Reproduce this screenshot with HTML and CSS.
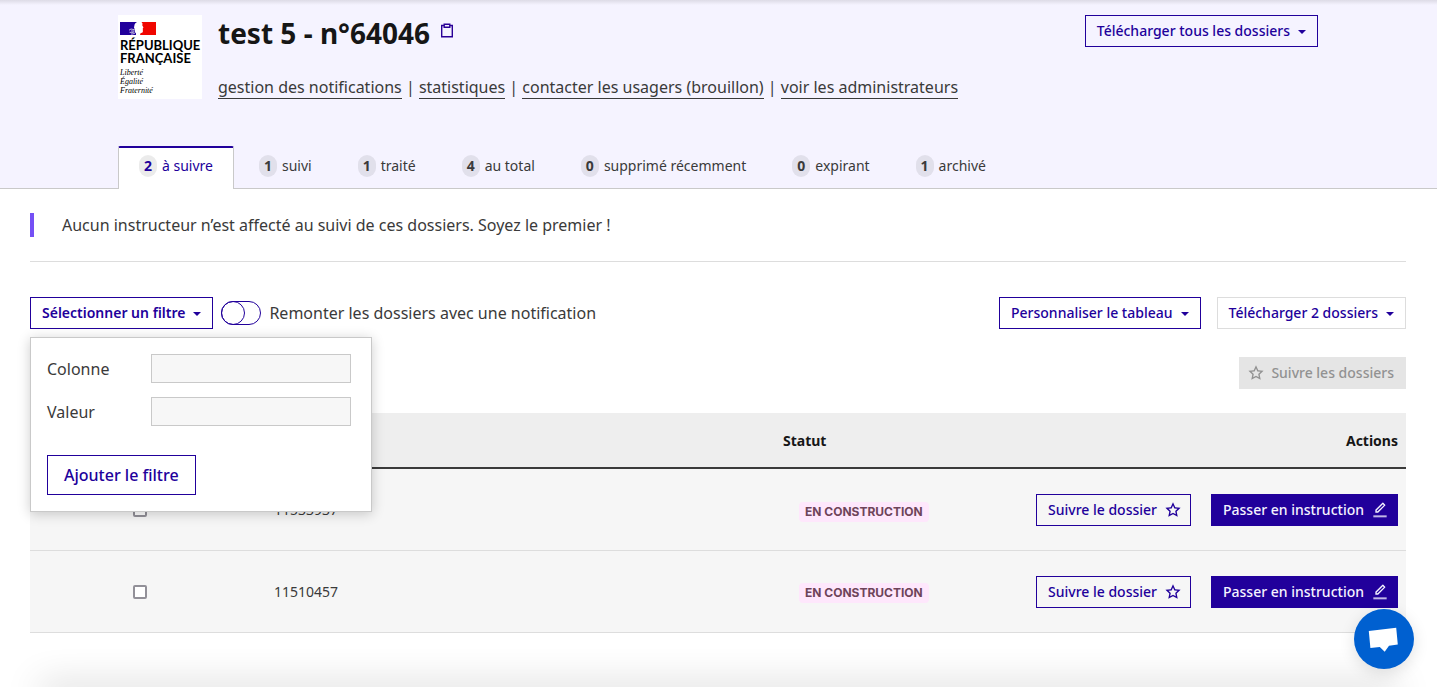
FILE: index.html
```html
<!DOCTYPE html>
<html lang="fr">
<head>
<meta charset="utf-8">
<meta name="viewport" content="width=device-width, initial-scale=1">
<title>test 5 - n°64046</title>
<link rel="stylesheet" href="styles.css">
</head>
<body>
<svg class="sprite" aria-hidden="true">
  <symbol id="star" viewBox="0 0 24 24"><path d="M12 18.3 4.9 22.2 6.5 14.300.6 8.800 8.600 7.900 12 .5 15.400 7.900 23.400 8.800 17.500 14.300 19.100 22.200ZM12 16 16.200 18.400 15.300 13.600 18.800 10.300 14 9.700 12 5.300 10 9.700 5.200 10.300 8.700 13.600 7.800 18.400Z" fill="currentColor" fill-rule="evenodd"/></symbol>
  <symbol id="pencil" viewBox="0 0 24 24"><path d="M5 16 5 11.800 15.600 1.200a1 1 0 0 1 1.400 0l2.800 2.800a1 1 0 0 1 0 1.400L9.200 16ZM7 14h1.400L17.700 4.700 16.300 3.300 7 12.600Z" fill="currentColor" fill-rule="evenodd"/><path d="M2 20h20v3H2z" fill="currentColor" opacity=".75"/></symbol>
</svg>

<header class="page-header">
  <div class="container">
    <div class="heading">
      <div class="logo">
        <svg class="flag" viewBox="0 0 36 13" aria-hidden="true">
          <path d="M0 0h36v13H0z" fill="#fff"/>
          <path d="M0 0h17c-1.500 1-2.500 2-2.600 3.500l-.4 2 1 2.500-.3 2 1.300 1.300V13H0z" fill="#21009b"/>
          <path d="M21.500 0H36v13H20l.5-1.800 2-.6.500-1.600-.3-1 .3-1-.3-.8.800-.7-1.200-2 .2-2z" fill="#f00600"/>
          <path d="M9 8.200q2-2 4-.8l2 .6M9.500 10.200q2 .8 4.500-.2M11 12q2 .4 4-1M11 9h3" fill="none" stroke="#d3cee8" stroke-width=".9"/>
        </svg>
        <div class="logo-name">RÉPUBLIQUE<br>FRANÇAISE</div>
        <div class="logo-motto">Liberté<br>Égalité<br>Fraternité</div>
      </div>
      <div class="heading-text">
        <div class="title-row">
          <h1>test 5 - n°64046</h1>
          <button class="copy" type="button" aria-label="Copier le numéro">
            <svg viewBox="0 0 14 16" aria-hidden="true"><path d="M3.500 2.500H1.700v11.300h10.600V2.500h-1.800M4.200 1.300h5.600v2.900H4.200z" fill="none" stroke="currentColor" stroke-width="1.400"/></svg>
          </button>
          <button class="btn push" type="button">Télécharger tous les dossiers<span class="caret"></span></button>
        </div>
        <p class="links"><a href="#">gestion des notifications</a> | <a href="#">statistiques</a> | <a href="#">contacter les usagers (brouillon)</a> | <a href="#">voir les administrateurs</a></p>
      </div>
    </div>
    <nav class="tabs" aria-label="Dossiers">
      <a class="tab active" href="#" aria-current="page"><span class="count">2</span>à suivre</a>
      <a class="tab" href="#"><span class="count">1</span>suivi</a>
      <a class="tab" href="#"><span class="count">1</span>traité</a>
      <a class="tab" href="#"><span class="count">4</span>au total</a>
      <a class="tab" href="#"><span class="count">0</span>supprimé récemment</a>
      <a class="tab" href="#"><span class="count">0</span>expirant</a>
      <a class="tab" href="#"><span class="count">1</span>archivé</a>
    </nav>
  </div>
</header>

<main>
  <p class="notice">Aucun instructeur n’est affecté au suivi de ces dossiers. Soyez le premier !</p>
  <div class="toolbar">
    <div class="dropdown">
      <button class="btn strong" type="button" aria-expanded="true">Sélectionner un filtre<span class="caret"></span></button>
      <form class="panel">
        <div class="field"><label for="column">Colonne</label><select id="column"><option></option></select></div>
        <div class="field"><label for="value">Valeur</label><input id="value" type="text"></div>
        <button class="btn large" type="button">Ajouter le filtre</button>
      </form>
    </div>
    <label class="toggle"><input type="checkbox"><span class="track"></span>Remonter les dossiers avec une notification</label>
    <button class="btn push" type="button">Personnaliser le tableau<span class="caret"></span></button>
    <button class="btn pale" type="button">Télécharger 2 dossiers<span class="caret"></span></button>
  </div>
  <div class="batch">
    <button class="btn disabled" type="button" disabled><svg class="icon" aria-hidden="true"><use href="#star"/></svg>Suivre les dossiers</button>
  </div>
  <table>
    <thead>
      <tr><th class="col-check"></th><th class="col-id">Nº dossier</th><th class="col-status">Statut</th><th class="col-actions">Actions</th></tr>
    </thead>
    <tbody>
      <tr>
        <td class="col-check"><input type="checkbox" aria-label="Dossier 11533937"></td>
        <td><a class="cell-link" href="#">11533937</a></td>
        <td><span class="badge">EN CONSTRUCTION</span></td>
        <td><div class="actions"><button class="btn" type="button">Suivre le dossier<svg class="icon" aria-hidden="true"><use href="#star"/></svg></button><button class="btn primary" type="button">Passer en instruction<svg class="icon" aria-hidden="true"><use href="#pencil"/></svg></button></div></td>
      </tr>
      <tr>
        <td class="col-check"><input type="checkbox" aria-label="Dossier 11510457"></td>
        <td><a class="cell-link" href="#">11510457</a></td>
        <td><span class="badge">EN CONSTRUCTION</span></td>
        <td><div class="actions"><button class="btn" type="button">Suivre le dossier<svg class="icon" aria-hidden="true"><use href="#star"/></svg></button><button class="btn primary" type="button">Passer en instruction<svg class="icon" aria-hidden="true"><use href="#pencil"/></svg></button></div></td>
      </tr>
    </tbody>
  </table>
</main>

<div class="bottom-shade"></div>
<button class="chat" type="button" aria-label="Ouvrir la discussion">
  <svg viewBox="0 0 60 60" aria-hidden="true"><path d="M14.800 22 42.200 18.700 43.800 35.500 35 36.700 30.700 42.800 25.800 37.900 16.400 39Z" fill="#fff"/></svg>
</button>
</body>
</html>
```
FILE: styles.css
```css
*, ::before { box-sizing: border-box; }

body {
  margin: 0;
  background: #fff;
  color: #3a3a3a;
  font-family: "Noto Sans", "Open Sans", sans-serif;
  font-size: 16px;
  line-height: 24px;
}

button, input, select { font: inherit; }
h1, p { margin: 0; }
.sprite { position: absolute; width: 0; height: 0; }

/* Header */
.page-header {
  padding-right: 1px;
  background: linear-gradient(#dddbe6, #f5f3ff 5px);
  border-bottom: 1px solid #c9c9c9;
}
.container { max-width: 1200px; margin: 0 auto; padding-top: 15px; }
.heading { display: flex; gap: 16px; }

.logo {
  flex: none;
  width: 84px;
  height: 84px;
  padding: 7px 2px 0;
  background: #fff;
  color: #000;
}
.flag { display: block; width: 36px; height: 13px; }
.logo-name {
  margin-top: 4px;
  font: bold 13px/13px Lato, sans-serif;
}
.logo-motto {
  margin-top: 3px;
  font: italic 8px/9px "Liberation Serif", serif;
}

.heading-text { flex: 1; }
.title-row { display: flex; align-items: flex-start; }
h1 {
  color: #161616;
  font-size: 28px;
  line-height: 36px;
}
.copy {
  margin: 8px 0 0 10px;
  padding: 0;
  border: 0;
  background: none;
  color: #2a0097;
}
.copy svg { display: block; width: 14px; height: 16px; }
.links { margin-top: 24px; line-height: 24px; }
.links a {
  color: inherit;
  text-decoration: none;
  border-bottom: 1px solid;
}
.push { margin-left: auto; }

.tabs { display: flex; gap: 4px; margin-top: 47px; }
.tab {
  display: flex;
  align-items: center;
  gap: 5px;
  height: 43px;
  margin-bottom: -1px;
  padding: 0 20px 4px;
  border: 1px solid transparent;
  border-bottom: 0;
  color: #3a3a3a;
  font-size: 14px;
  text-decoration: none;
}
.tab.active {
  padding-bottom: 5px;
  border-color: #c9c9c9;
  border-top: 2px solid #21009b;
  border-radius: 2px 2px 0 0;
  background: #fff;
  color: #21009b;
}
.count {
  width: 18px;
  border-radius: 9px;
  background: rgba(0, 0, 0, .08);
  font-weight: bold;
  line-height: 22px;
  text-align: center;
}

/* Buttons */
.btn {
  display: inline-flex;
  align-items: center;
  justify-content: center;
  height: 32px;
  padding: 0 11px;
  border: 1px solid #21009b;
  background: transparent;
  color: #21009b;
  font-size: 14px;
  font-weight: 500;
  line-height: 24px;
  white-space: nowrap;
}
.btn.strong { font-weight: 600; }
.btn.large { height: 40px; padding: 0 16px; font-size: 16px; }
.btn.pale { border-color: #ddd; }
.btn.primary { background: #21009b; color: #f5f3ff; }
.btn.disabled { border-color: #e5e5e5; background: #e5e5e5; color: #929292; }
.caret {
  margin: 1px 0 0 8px;
  border: 4px solid transparent;
  border-top-color: currentColor;
  border-bottom-width: 0;
}
.icon { width: 16px; height: 16px; }
.btn .icon { margin: 0 -2px 0 8px; }
.btn.disabled .icon { margin: 0 7px 0 -3px; }

/* Content */
main { padding: 24px 31px 0 30px; }
.notice { padding-left: 28px; border-left: 4px solid #7550f5; }
.toolbar {
  display: flex;
  align-items: center;
  margin-top: 24px;
  padding-top: 35px;
  border-top: 1px solid #ddd;
}
.toolbar .pale { margin-left: 16px; }
.dropdown { position: relative; display: flex; }
.panel {
  position: absolute;
  top: 40px;
  left: 0;
  z-index: 1;
  width: 342px;
  padding: 16px;
  border: 1px solid #c9c9c9;
  background: #fff;
  box-shadow: 0 2px 12px rgba(0, 0, 0, .2);
}
.field { display: flex; align-items: center; margin-bottom: 14px; }
.field label { width: 104px; }
.field input, .field select {
  appearance: none;
  width: 200px;
  height: 29px;
  padding: 0 8px;
  border: 1px solid #c9c9c9;
  border-radius: 0;
  background: #f7f7f7;
}
.panel .btn { margin-top: 15px; }

.toggle { display: flex; align-items: center; gap: 8px; margin-left: 8px; }
.toggle input { position: absolute; opacity: 0; }
.track {
  width: 40px;
  height: 24px;
  border: 1px solid #21009b;
  border-radius: 12px;
}
.track::before {
  content: "";
  display: block;
  width: 24px;
  height: 24px;
  margin: -1px;
  border: 1px solid #21009b;
  border-radius: 50%;
}
.batch { display: flex; justify-content: flex-end; margin: 28px 0 24px; }

/* Table */
table {
  width: 100%;
  border-collapse: collapse;
  table-layout: fixed;
  font-size: 14px;
}
thead { background: #eee; color: #161616; }
thead tr { border-bottom: 2px solid #3a3a3a; }
th { height: 55px; padding: 2px 8px 0; text-align: left; }
td { height: 82px; padding: 2px 8px 0; }
tbody tr { border-bottom: 1px solid #ddd; background: #f6f6f6; }
.col-check { width: 220px; text-align: center; }
.col-id { width: 525px; }
.col-actions { width: 35%; text-align: right; }
td input {
  appearance: none;
  display: block;
  width: 14px;
  height: 14px;
  margin: 0 auto;
  border: 2px solid #929098;
  border-radius: 2px;
  background: #fff;
}
.cell-link { padding: 0 16px; color: inherit; text-decoration: none; }
.badge {
  display: inline-block;
  margin-left: 16px;
  padding: 0 6px;
  border-radius: 4px;
  background: #fee7fc;
  color: #6e445a;
  font-family: Inter, sans-serif;
  font-size: 12px;
  font-weight: bold;
  line-height: 20px;
  vertical-align: middle;
  white-space: nowrap;
}
.actions { display: flex; justify-content: flex-end; gap: 20px; }

/* Floating elements */
.bottom-shade {
  position: fixed;
  right: 40px;
  bottom: -10px;
  left: 40px;
  height: 10px;
  box-shadow: 0 0 36px rgba(0, 0, 0, .3);
}
.chat {
  position: fixed;
  right: 23px;
  bottom: 18px;
  width: 60px;
  height: 60px;
  padding: 0;
  border: 0;
  border-radius: 50%;
  background: #0060d0;
  box-shadow: 0 4px 16px rgba(0, 0, 0, .12);
}
.chat svg { display: block; }
```
